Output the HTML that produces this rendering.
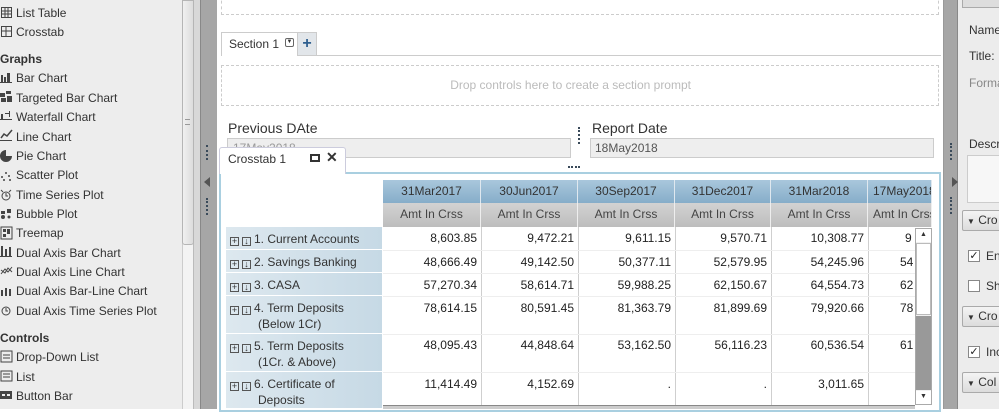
<!DOCTYPE html>
<html><head><meta charset="utf-8"><style>
*{box-sizing:border-box;margin:0;padding:0}
body{width:999px;height:409px;overflow:hidden;background:#fff;font-family:"Liberation Sans",sans-serif;font-size:12px;color:#333;position:relative}
.a{position:absolute}
#left{left:0;top:0;width:182px;height:409px;background:#ededed}
.it{position:absolute;left:16px;font-size:12px;color:#333;white-space:nowrap}
.hd{position:absolute;left:0;font-weight:bold;color:#333;font-size:12px}
.dots{position:absolute;width:2px;border-left:2px dotted #3a4a5a}
.th1{position:absolute;top:180px;height:23px;background:linear-gradient(#a9c7dc,#86adc9);border-right:1px solid #dfe8ef;text-align:center;line-height:23px;color:#333}
.th2{position:absolute;top:203px;height:24px;background:linear-gradient(#d2d2d2,#bdbdbd);border-right:1px solid #eee;text-align:center;line-height:22px;color:#444}
.rh{position:absolute;left:226px;width:156px;background:linear-gradient(90deg,#dde8ef,#c6d9e5);border-bottom:1px solid #fff;padding-left:4px;line-height:16px;color:#333}
.rh b{font-weight:normal;display:inline-block;width:9px;height:9px;border:1px solid #555;margin-right:3px;vertical-align:-1px;font-size:9px;line-height:7px;text-align:center}
.vl{position:absolute;top:227px;height:178px;width:1px;background:#cfcfcf}
.num{position:absolute;text-align:right;color:#222}
.ck{position:absolute;left:968px;width:12px;height:12px;border:1px solid #888;background:#fff;font-size:11px;line-height:10px;text-align:center;color:#222}
.btn{position:absolute;left:962px;width:40px;height:21px;border:1px solid #aaa;background:linear-gradient(#f4f4f4,#dcdcdc);line-height:19px;padding-left:4px;color:#333;border-radius:2px}
</style></head><body>
<div class="a" id="left"></div>
<svg class="a" style="left:0;top:0" width="16" height="409">
<g fill="none" stroke="#444" stroke-width="1">
<rect x="1.5" y="7.5" width="10" height="10"/><path d="M1 11h11M1 14h11M5 8v10M8 8v10"/>
<rect x="1.5" y="26.5" width="10" height="10"/><path d="M1 31h11M6 27v10"/>
</g>
<g fill="#444">
<rect x="1" y="75" width="2" height="8"/><rect x="4" y="77" width="2" height="6"/><rect x="7" y="73" width="3" height="10"/><rect x="0" y="82" width="12" height="1"/>
<rect x="0" y="93" width="5" height="4"/><rect x="6" y="91" width="5" height="3"/><rect x="1" y="98" width="5" height="4"/><rect x="7" y="96" width="5" height="6"/>
<rect x="0" y="119" width="12" height="1"/><rect x="1" y="114" width="2" height="5"/><rect x="5" y="113" width="4" height="1"/><rect x="9" y="111" width="1" height="6"/>
<rect x="0" y="140" width="12" height="1"/><path d="M1 138l3-4 3 2 5-6" stroke="#444" fill="none" stroke-width="1.5"/>
<path d="M6 150a6 6 0 1 0 6 6h-6z"/>
<circle cx="2" cy="177" r="1"/><circle cx="6" cy="173" r="1"/><circle cx="9" cy="176" r="1"/><circle cx="4" cy="180" r="1"/><circle cx="10" cy="180" r="1"/>
<rect x="1" y="211" width="4" height="3"/><rect x="7" y="209" width="4" height="4"/><circle cx="3" cy="217" r="2"/><circle cx="9" cy="217" r="1.5"/>
<rect x="1" y="227" width="11" height="12" fill="none" stroke="#444"/><rect x="3" y="229" width="3" height="3"/><rect x="7" y="229" width="3" height="5"/><rect x="3" y="234" width="3" height="3"/>
<rect x="1" y="246" width="2" height="10"/><rect x="5" y="249" width="2" height="7"/><rect x="9" y="247" width="2" height="9"/><rect x="0" y="256" width="12" height="1"/>
<path d="M1 274l4-5 3 3 4-5M1 270l4 3 3-5 4 4" stroke="#444" fill="none"/>
<rect x="1" y="290" width="2" height="6"/><rect x="5" y="288" width="2" height="8"/><rect x="9" y="289" width="2" height="7"/>
<rect x="1" y="351" width="11" height="11" fill="none" stroke="#444"/><path d="M3 355h7M3 358h7" stroke="#444"/>
<rect x="1" y="371" width="11" height="10" fill="none" stroke="#444"/><path d="M3 374h7M3 377h7" stroke="#444"/>
<rect x="0" y="391" width="12" height="8"/><rect x="2" y="394" width="3" height="2" fill="#eee"/><rect x="7" y="394" width="3" height="2" fill="#eee"/>
</g>
<g fill="none" stroke="#444"><circle cx="6" cy="196" r="4"/><path d="M6 193v3h2M1 190l2 2M11 190l-2 2"/><circle cx="6" cy="311" r="4"/><path d="M6 308v3h2"/></g>
</svg>
<div class="it" style="top:6px">List Table</div>
<div class="it" style="top:25px">Crosstab</div>
<div class="hd" style="top:52px">Graphs</div>
<div class="it" style="top:71px">Bar Chart</div>
<div class="it" style="top:91px">Targeted Bar Chart</div>
<div class="it" style="top:110px">Waterfall Chart</div>
<div class="it" style="top:130px">Line Chart</div>
<div class="it" style="top:149px">Pie Chart</div>
<div class="it" style="top:168px">Scatter Plot</div>
<div class="it" style="top:188px">Time Series Plot</div>
<div class="it" style="top:207px">Bubble Plot</div>
<div class="it" style="top:226px">Treemap</div>
<div class="it" style="top:246px">Dual Axis Bar Chart</div>
<div class="it" style="top:265px">Dual Axis Line Chart</div>
<div class="it" style="top:284px">Dual Axis Bar-Line Chart</div>
<div class="it" style="top:304px">Dual Axis Time Series Plot</div>
<div class="hd" style="top:331px">Controls</div>
<div class="it" style="top:350px">Drop-Down List</div>
<div class="it" style="top:370px">List</div>
<div class="it" style="top:389px">Button Bar</div>
<div class="a" style="left:182px;top:0;width:12px;height:409px;background:#f3f3f3;border-left:1px solid #ccc;border-right:1px solid #bbb"></div>
<div class="a" style="left:182px;top:0;width:12px;height:245px;background:linear-gradient(90deg,#f0f0f0,#dcdcdc);border:1px solid #b5b5b5;border-radius:0 0 3px 3px"></div>
<div class="a" style="left:185px;top:119px;width:5px;height:6px;border-top:1px solid #999;border-bottom:1px solid #999"></div>
<div class="a" style="left:194px;top:0;width:6px;height:409px;background:#d8d8d8"></div>
<div class="a" style="left:200px;top:0;width:17px;height:409px;background:#a6a6a6;border-left:1px solid #888"></div>
<div class="dots" style="left:206px;top:145px;height:15px"></div>
<div class="a" style="left:204px;top:177px;width:0;height:0;border-top:5px solid transparent;border-bottom:5px solid transparent;border-right:6px solid #555"></div>
<div class="dots" style="left:206px;top:198px;height:17px"></div>
<div class="a" style="left:218px;top:0;width:725px;height:409px;background:#fff"></div>
<div class="a" style="left:221px;top:-5px;width:718px;height:20px;border:1px dashed #ccc"></div>
<div class="a" style="left:221px;top:32px;width:720px;height:24px;border-bottom:1px solid #ccc"></div>
<div class="a" style="left:221px;top:32px;width:77px;height:24px;border:1px solid #ccc;border-bottom:none;background:#fff;padding:4px 0 0 7px;color:#333">Section 1</div>
<div class="a" style="left:285px;top:38px;width:9px;height:9px;border:1px solid #666;border-radius:2px;font-size:6px;line-height:7px;text-align:center">▼</div>
<div class="a" style="left:297px;top:32px;width:20px;height:24px;border:1px solid #ccc;background:#e2e6ea;text-align:center;font-weight:bold;font-size:16px;color:#2f5f8f;line-height:22px">+</div>
<div class="a" style="left:221px;top:65px;width:718px;height:41px;border:1px dashed #ccc;color:#bbb;text-align:right;padding:12px 247px 0 0">Drop controls here to create a section prompt</div>
<div class="a" style="left:228px;top:120px;font-size:14px;color:#333">Previous DAte</div>
<div class="a" style="left:227px;top:138px;width:344px;height:20px;background:#eee;border:1px solid #ccc;color:#999;padding:2px 5px">17May2018</div>
<div class="dots" style="left:578px;top:127px;height:17px"></div>
<div class="a" style="left:592px;top:120px;font-size:14px;color:#333">Report Date</div>
<div class="a" style="left:590px;top:138px;width:344px;height:20px;background:#eee;border:1px solid #ccc;color:#555;padding:2px 4px">18May2018</div>
<div class="a" style="left:568px;top:166px;width:12px;border-top:2px dotted #3a4a5a"></div>
<div class="a" style="left:219px;top:172px;width:722px;height:240px;border:2px solid #a9cfe0;background:#fff"></div>
<div class="a" style="left:219px;top:147px;width:127px;height:27px;border:1px solid #ccd;border-bottom:none;background:#fff;border-radius:3px 3px 0 0;padding:4px 0 0 8px;color:#333">Crosstab 1</div>
<div class="a" style="left:310px;top:154px;width:10px;height:8px;border:2px solid #333"></div>
<div class="a" style="left:326px;top:149px;font-weight:bold;font-size:14px;color:#333">✕</div>
<div class="th1" style="left:383px;width:98px">31Mar2017</div>
<div class="th1" style="left:481px;width:97px">30Jun2017</div>
<div class="th1" style="left:578px;width:97px">30Sep2017</div>
<div class="th1" style="left:675px;width:96px">31Dec2017</div>
<div class="th1" style="left:771px;width:97px">31Mar2018</div>
<div class="th1" style="left:868px;width:64px;overflow:hidden;white-space:nowrap;text-align:left;padding-left:5px">17May2018</div>
<div class="th2" style="left:383px;width:98px">Amt In Crss</div>
<div class="th2" style="left:481px;width:97px">Amt In Crss</div>
<div class="th2" style="left:578px;width:97px">Amt In Crss</div>
<div class="th2" style="left:675px;width:96px">Amt In Crss</div>
<div class="th2" style="left:771px;width:97px">Amt In Crss</div>
<div class="th2" style="left:868px;width:64px;overflow:hidden;white-space:nowrap;text-align:left;padding-left:5px">Amt In Crss</div>
<div class="rh" style="top:227px;height:23px;padding-top:4px"><b>+</b><b>↓</b>1. Current Accounts</div>
<div class="rh" style="top:250px;height:23px;padding-top:4px"><b>+</b><b>↓</b>2. Savings Banking</div>
<div class="rh" style="top:273px;height:23px;padding-top:4px"><b>+</b><b>↓</b>3. CASA</div>
<div class="rh" style="top:296px;height:38px;padding-top:4px"><b>+</b><b>↓</b>4. Term Deposits<br><span style="padding-left:28px">(Below 1Cr)</span></div>
<div class="rh" style="top:334px;height:38px;padding-top:4px"><b>+</b><b>↓</b>5. Term Deposits<br><span style="padding-left:28px">(1Cr. &amp; Above)</span></div>
<div class="rh" style="top:372px;height:37px;padding-top:4px"><b>+</b><b>↓</b>6. Certificate of<br><span style="padding-left:28px">Deposits</span></div>
<div class="vl" style="left:481px"></div><div class="vl" style="left:578px"></div><div class="vl" style="left:675px"></div><div class="vl" style="left:771px"></div><div class="vl" style="left:868px"></div>
<div class="a" style="left:383px;top:250px;width:532px;border-top:1px solid #eee"></div>
<div class="a" style="left:383px;top:273px;width:532px;border-top:1px solid #eee"></div>
<div class="a" style="left:383px;top:296px;width:532px;border-top:1px solid #eee"></div>
<div class="a" style="left:383px;top:334px;width:532px;border-top:1px solid #eee"></div>
<div class="a" style="left:383px;top:372px;width:532px;border-top:1px solid #eee"></div>
<div class="num" style="top:231px;left:383px;width:94px">8,603.85</div>
<div class="num" style="top:231px;left:481px;width:93px">9,472.21</div>
<div class="num" style="top:231px;left:578px;width:93px">9,611.15</div>
<div class="num" style="top:231px;left:675px;width:92px">9,570.71</div>
<div class="num" style="top:231px;left:771px;width:93px">10,308.77</div>
<div class="num" style="top:255px;left:383px;width:94px">48,666.49</div>
<div class="num" style="top:255px;left:481px;width:93px">49,142.50</div>
<div class="num" style="top:255px;left:578px;width:93px">50,377.11</div>
<div class="num" style="top:255px;left:675px;width:92px">52,579.95</div>
<div class="num" style="top:255px;left:771px;width:93px">54,245.96</div>
<div class="num" style="top:278px;left:383px;width:94px">57,270.34</div>
<div class="num" style="top:278px;left:481px;width:93px">58,614.71</div>
<div class="num" style="top:278px;left:578px;width:93px">59,988.25</div>
<div class="num" style="top:278px;left:675px;width:92px">62,150.67</div>
<div class="num" style="top:278px;left:771px;width:93px">64,554.73</div>
<div class="num" style="top:301px;left:383px;width:94px">78,614.15</div>
<div class="num" style="top:301px;left:481px;width:93px">80,591.45</div>
<div class="num" style="top:301px;left:578px;width:93px">81,363.79</div>
<div class="num" style="top:301px;left:675px;width:92px">81,899.69</div>
<div class="num" style="top:301px;left:771px;width:93px">79,920.66</div>
<div class="num" style="top:338px;left:383px;width:94px">48,095.43</div>
<div class="num" style="top:338px;left:481px;width:93px">44,848.64</div>
<div class="num" style="top:338px;left:578px;width:93px">53,162.50</div>
<div class="num" style="top:338px;left:675px;width:92px">56,116.23</div>
<div class="num" style="top:338px;left:771px;width:93px">60,536.54</div>
<div class="num" style="top:377px;left:383px;width:94px">11,414.49</div>
<div class="num" style="top:377px;left:481px;width:93px">4,152.69</div>
<div class="num" style="top:377px;left:578px;width:93px">.</div>
<div class="num" style="top:377px;left:675px;width:92px">.</div>
<div class="num" style="top:377px;left:771px;width:93px">3,011.65</div>
<div class="num" style="top:231px;left:905px">9</div><div class="num" style="top:255px;left:900px">54</div><div class="num" style="top:278px;left:900px">62</div><div class="num" style="top:301px;left:900px">78</div><div class="num" style="top:338px;left:900px">61</div>
<div class="a" style="left:915px;top:228px;width:17px;height:177px;background:#f0f0f0;border:1px solid #aaa"></div>
<div class="a" style="left:916px;top:243px;width:15px;height:72px;background:#fff;border:1px solid #bbb"></div>
<div class="a" style="left:916px;top:229px;width:15px;height:13px;background:#fff;font-size:7px;text-align:center;line-height:12px">▲</div>
<div class="a" style="left:916px;top:391px;width:15px;height:13px;background:#fff;font-size:7px;text-align:center;line-height:12px">▼</div>
<div class="a" style="left:916px;top:316px;width:15px;height:74px;background:#999"></div>
<div class="a" style="left:383px;top:405px;width:532px;height:4px;background:#ccc;border-top:1px solid #888"></div>
<div class="a" style="left:943px;top:0;width:15px;height:409px;background:#a6a6a6;border-left:1px solid #999;border-right:1px solid #888"></div>
<div class="dots" style="left:950px;top:143px;height:17px"></div>
<div class="a" style="left:952px;top:177px;width:0;height:0;border-top:5px solid transparent;border-bottom:5px solid transparent;border-left:6px solid #555"></div>
<div class="dots" style="left:950px;top:197px;height:17px"></div>
<div class="a" style="left:958px;top:0;width:41px;height:409px;background:#ececec"></div>
<div class="a" style="left:962px;top:-4px;width:40px;height:12px;border:1px solid #aaa;background:#ddd"></div>
<div class="a" style="left:969px;top:23px;color:#333">Name</div>
<div class="a" style="left:969px;top:49px;color:#333">Title:</div>
<div class="a" style="left:969px;top:76px;color:#888">Format</div>
<div class="a" style="left:969px;top:137px;color:#333">Descr</div>
<div class="a" style="left:967px;top:155px;width:40px;height:48px;background:#f7f7f7;border:1px solid #ccc"></div>
<div class="btn" style="top:210px"><span style="font-size:8px">▼</span> Cro</div>
<div class="ck" style="top:250px">✓</div><div class="a" style="left:986px;top:249px">En</div>
<div class="ck" style="top:280px"></div><div class="a" style="left:986px;top:279px">Sh</div>
<div class="btn" style="top:306px"><span style="font-size:8px">▼</span> Cro</div>
<div class="ck" style="top:346px">✓</div><div class="a" style="left:986px;top:345px">Inc</div>
<div class="btn" style="top:372px"><span style="font-size:8px">▼</span> Col</div>
</body></html>
